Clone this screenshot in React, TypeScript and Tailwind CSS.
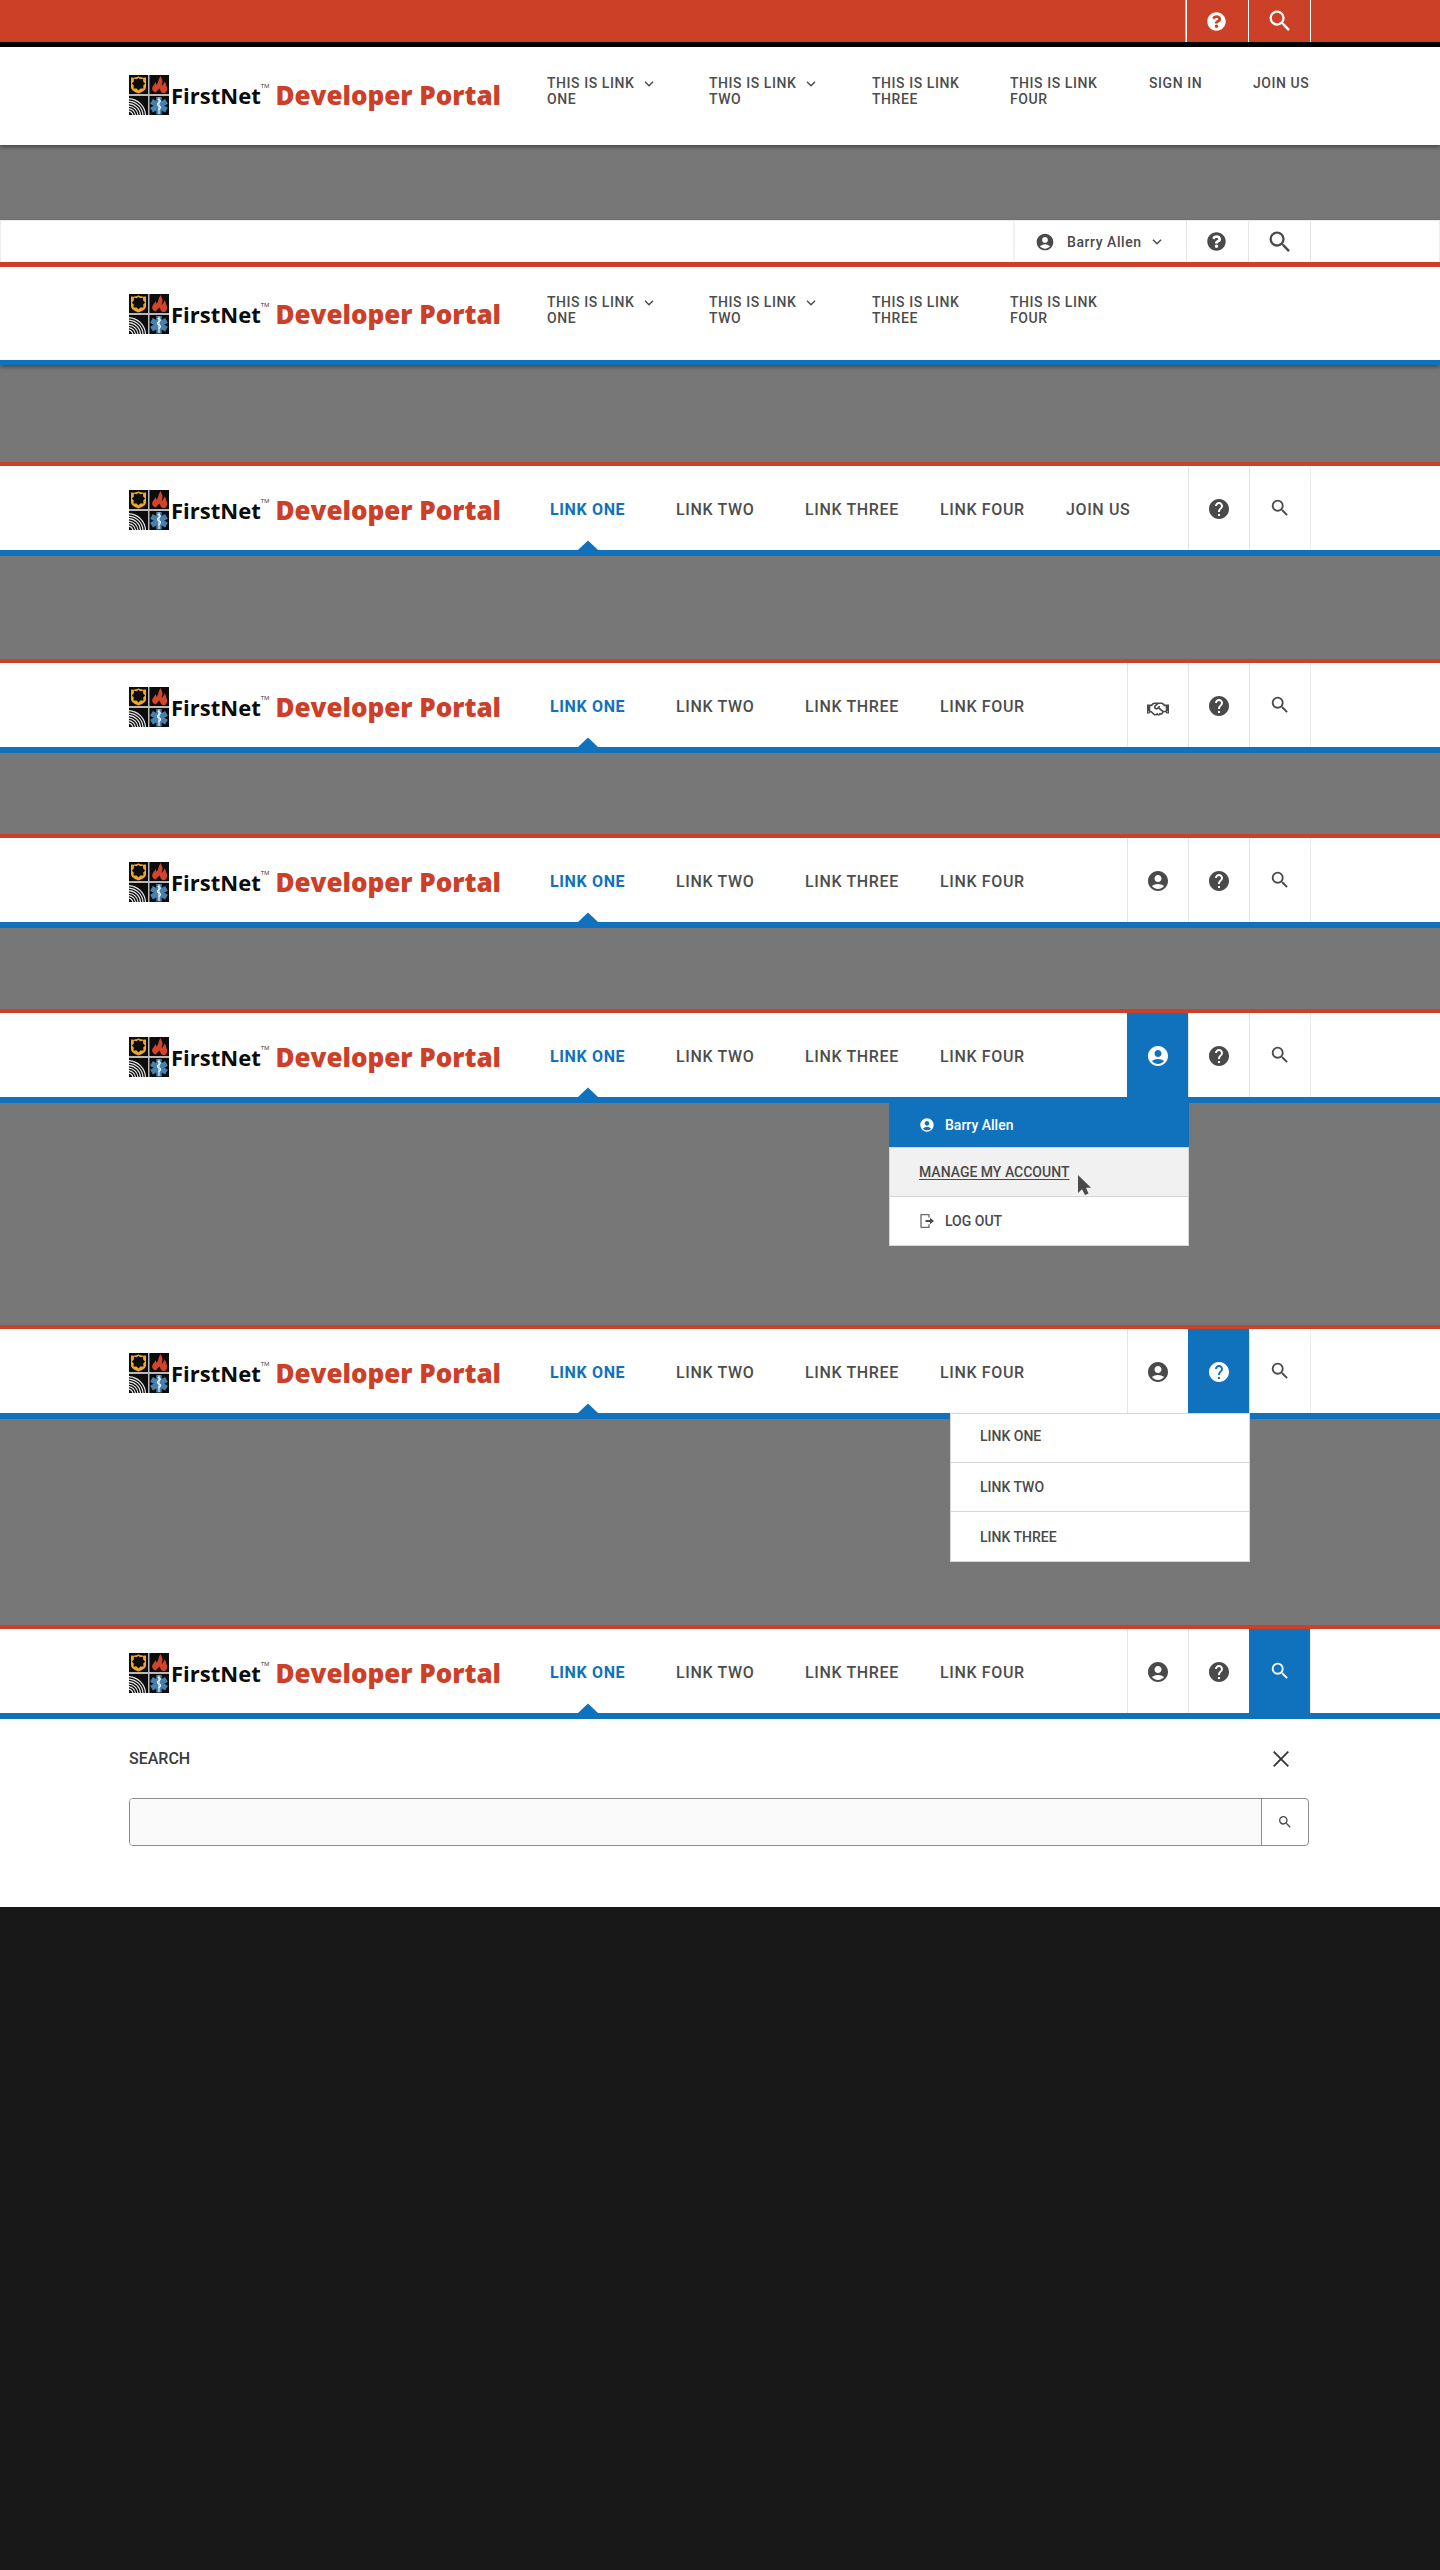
import React from "react";
import { MdAccountCircle, MdHelp, MdSearch } from "react-icons/md";
import { FaQuestionCircle, FaRegHandshake } from "react-icons/fa";

type Tool = "partner" | "account" | "help" | "search";

function Emblem() {
  return (
    <svg viewBox="0 0 40 40" className="size-10 shrink-0" aria-hidden="true">
      <rect width="40" height="40" fill="#b9b9b9" />
      <rect width="19" height="19" fill="#0c0c0c" />
      <rect x="20.5" width="19.5" height="19" fill="#0c0c0c" />
      <rect y="21" width="19" height="19" fill="#0c0c0c" />
      <rect x="20.5" y="21" width="19.5" height="19" fill="#0c0c0c" />
      <path d="M2 2.6C5 3 7.5 2.6 9.5 1.3c2 1.300 4.500 1.700 7.500 1.300v9.400c0 3.200-3 4.800-7.500 6.400C5 16.800 2 15.200 2 12z" fill="#f0a62a" />
      <path d="M9.500 3.600l1.600 1.300 2.400-.4.1 2.400 1.700 1.700-1.700 1.700.2 2.500-2.500-.1-1.800 2-1.800-2-2.500.1.200-2.500-1.700-1.700 1.700-1.700.1-2.400 2.400.4z" fill="#0c0c0c" stroke="#0c0c0c" strokeWidth="1.200" />
      <path d="M31.800.9c.6 2.800 2.400 4.400 1.600 7.200-.3 1.100-.9 1.900-.4 2.900.7-2 2.600-2.500 2.400-4.700 2.200 2 1.200 3.900 2.500 5.800.9 1.500.4 4.100-1.500 5.700-1.500.5-3.500.3-4.300-.8-1-1.400-.7-2.500-1.700-3.500-.8 1.500-2.800 1.900-3.200 3.900-2.400-.5-4.500-1.900-4-4.700.5-2.500 2.600-2.800 2.900-5.500 1 .7 1.300 1.500 1.300 2.500C30 7.500 28.700 4.500 31.800.9z" fill="#d2452b" />
      <svg x="0" y="21" width="19" height="19" viewBox="0 0 19 19">
        <g fill="none" stroke="#e4e4e4" strokeWidth="1.200">
          <circle cx="-1" cy="20" r="5" />
          <circle cx="-1" cy="20" r="7.500" />
          <circle cx="-1" cy="20" r="10" />
          <circle cx="-1" cy="20" r="12.500" />
          <circle cx="-1" cy="20" r="15" />
          <circle cx="-1" cy="20" r="17.500" />
        </g>
      </svg>
      <g stroke="#4682ad" strokeWidth="5.400">
        <path d="M30 22v17.500M22.500 26.400l15 8.700M37.500 26.400l-15 8.700" />
      </g>
      <path d="M30 22.500v16.500" stroke="#fff" strokeWidth="1" />
      <path d="M28.600 24.500c3.400.4 3.400 2.300 1.300 3.200s-1.900 2.700.3 3.300 1.700 2.700-.6 3.600" fill="none" stroke="#fff" strokeWidth="1.100" />
    </svg>
  );
}

function Brand() {
  return (
    <a href="#home" className="flex w-[418px] shrink-0 items-center whitespace-nowrap font-['Open_Sans',sans-serif]">
      <Emblem />
      <span className="ml-0.5 text-[22px] leading-10 font-bold text-[#0c0c0c]">FirstNet</span>
      <sup className="mb-3 text-[6px] text-[#333]">TM</sup>
      <span className="ml-1.5 text-[26px] leading-10 font-extrabold text-[#cc4028]">Developer Portal</span>
    </a>
  );
}

function Chevron() {
  return (
    <svg viewBox="0 0 10 6" className="h-1.5 w-2.5 shrink-0" fill="none" stroke="currentColor" strokeWidth="1.500" aria-hidden="true">
      <path d="M1 .8l4 4 4-4" />
    </svg>
  );
}

function WideLink({ first, second, menu }: { first: string; second?: string; menu?: boolean }) {
  return (
    <a href="#link" className="flex items-start gap-2.5 whitespace-nowrap">
      <span>
        {first}
        {second && <br />}
        {second}
      </span>
      {menu && (
        <span className="pt-1.5">
          <Chevron />
        </span>
      )}
    </a>
  );
}

function WideNav({ guest }: { guest?: boolean }) {
  return (
    <nav className="grid grid-cols-[162px_163px_138px_139px_104px_auto] pb-2 text-sm leading-4 font-medium tracking-[0.04em] text-[#4d4d4d]">
      <WideLink first="THIS IS LINK" second="ONE" menu />
      <WideLink first="THIS IS LINK" second="TWO" menu />
      <WideLink first="THIS IS LINK" second="THREE" />
      <WideLink first="THIS IS LINK" second="FOUR" />
      {guest && <WideLink first="SIGN IN" />}
      {guest && <WideLink first="JOIN US" />}
    </nav>
  );
}

function Shell({ children, className = "" }: { children: React.ReactNode; className?: string }) {
  return <div className={`mx-auto flex max-w-[1182px] ${className}`}>{children}</div>;
}

const toolLabels: Record<Tool, string> = {
  partner: "Partners",
  account: "Account",
  help: "Help",
  search: "Search",
};

function ToolIcon({ tool }: { tool: Tool }) {
  if (tool === "partner") return <FaRegHandshake className="mt-2 h-[18px] w-[22px]" />;
  if (tool === "account") return <MdAccountCircle className="mt-0.5 size-6" />;
  if (tool === "help") return <MdHelp className="mt-0.5 size-6" />;
  return <MdSearch className="size-[22px]" />;
}

function CompactHeader({
  tools,
  active,
  join,
  children,
}: {
  tools: Tool[];
  active?: Tool;
  join?: boolean;
  children?: React.ReactNode;
}) {
  return (
    <header className="border-t-4 border-b-6 border-t-[#cc4028] border-b-[#1072bd] bg-white">
      <Shell className="relative h-[84px] items-stretch">
        <div className="flex items-center pt-1">
          <Brand />
        </div>
        <nav className="ml-[3px] grid grid-cols-[126px_129px_135px_126px_auto] items-center pt-1 text-base font-medium tracking-[0.04em] whitespace-nowrap text-[#4d4d4d]">
          <a href="#one" aria-current="page" className="relative flex h-full items-center font-bold text-[#1072bd]">
            LINK ONE
            <svg viewBox="0 0 20 10" className="absolute bottom-0 left-7 h-2.5 w-5" aria-hidden="true">
              <path d="M10 0.500L20 10H0z" fill="#1072bd" />
            </svg>
          </a>
          <a href="#two">LINK TWO</a>
          <a href="#three">LINK THREE</a>
          <a href="#four">LINK FOUR</a>
          {join && <a href="#join">JOIN US</a>}
        </nav>
        <div className="ml-auto flex border-r border-[#ececec]">
          {tools.map((tool) => (
            <button
              key={tool}
              type="button"
              aria-label={toolLabels[tool]}
              className={
                tool === active
                  ? "flex w-[61px] items-center justify-center border-l border-[#1072bd] bg-[#1072bd] text-white"
                  : "flex w-[61px] items-center justify-center border-l border-[#e4e4e4] text-[#4a4a4a]"
              }
            >
              <ToolIcon tool={tool} />
            </button>
          ))}
        </div>
        {children}
      </Shell>
    </header>
  );
}

function UtilityButton({ label, dark, children }: { label: string; dark?: boolean; children: React.ReactNode }) {
  return (
    <button
      type="button"
      aria-label={label}
      className={
        dark
          ? "flex w-[62px] items-center justify-center border-l border-white text-white"
          : "flex w-[62px] items-center justify-center border-l border-[#e4e4e4] text-[#4a4a4a]"
      }
    >
      {children}
    </button>
  );
}

function AccountMenu() {
  return (
    <div className="absolute top-full right-[122px] w-[300px] text-sm font-medium text-[#4a4a4a]">
      <div className="flex h-[50px] items-center gap-2.5 bg-[#1072bd] px-[30px] pt-1.5 text-white">
        <MdAccountCircle className="size-4" />
        Barry Allen
      </div>
      <div className="border border-[#d6d6d6] bg-white">
        <a href="#account" className="relative flex h-12 items-center bg-[#f1f1f1] px-[29px] underline underline-offset-2">
          MANAGE MY ACCOUNT
          <svg viewBox="0 0 13 20" className="absolute top-[27px] left-[188px] h-5 w-[13px]" aria-hidden="true">
            <path d="M0 0v18l4-3.800 3 5.800 3.500-1.500L8 12.800h5z" fill="#4a4a4a" />
          </svg>
        </a>
        <a href="#logout" className="flex h-[49px] items-center gap-2.5 border-t border-[#d6d6d6] px-[29px]">
          <svg viewBox="0 0 16 16" className="size-4" fill="none" aria-hidden="true">
            <path d="M10 4.800V1.700H2v12.600h8v-3.100" stroke="#6a6a6a" strokeWidth="1.300" strokeLinejoin="round" />
            <path d="M6.500 8h6" stroke="#4a4a4a" strokeWidth="2" />
            <path d="M11 4.800L15 8l-4 3.200z" fill="#4a4a4a" />
          </svg>
          LOG OUT
        </a>
      </div>
    </div>
  );
}

function HelpMenu() {
  return (
    <div className="absolute top-full right-[61px] w-[300px] divide-y divide-[#d6d6d6] border border-[#d6d6d6] bg-white text-sm font-medium text-[#4a4a4a]">
      {["LINK ONE", "LINK TWO", "LINK THREE"].map((label) => (
        <a key={label} href="#help" className="flex h-[49px] items-center px-[29px] first:pb-1">
          {label}
        </a>
      ))}
    </div>
  );
}

function SearchPanel() {
  return (
    <section className="bg-white pt-[26px] pb-[61px]">
      <div className="mx-auto max-w-[1182px] pr-0.5">
        <div className="flex h-[27px] items-center justify-between">
          <label htmlFor="site-search" className="text-base font-medium text-[#3c3c3c]">
            SEARCH
          </label>
          <button type="button" aria-label="Close search" className="mr-5 text-[#333]">
            <svg viewBox="0 0 16 16" className="size-4" stroke="currentColor" strokeWidth="1.800" aria-hidden="true">
              <path d="M.7.700l14.600 14.600M15.300.700L.7 15.300" />
            </svg>
          </button>
        </div>
        <form className="mt-[26px] flex h-12 overflow-hidden rounded border border-[#8c8c8c]">
          <input id="site-search" type="text" className="min-w-0 grow bg-[#fafafa] px-4 outline-none" />
          <button type="button" aria-label="Submit search" className="flex w-[47px] items-center justify-center border-l border-[#8c8c8c] text-[#4a4a4a]">
            <MdSearch className="size-4" />
          </button>
        </form>
      </div>
    </section>
  );
}

export default function App() {
  return (
    <div className="min-h-screen bg-[#181818] font-['Roboto',sans-serif]">
      <main className="bg-[#777]">
        <header className="bg-white shadow-[0_2px_4px_rgba(0,0,0,0.4)]">
          <div className="border-b-5 border-black bg-[#cc4028]">
            <Shell className="h-[42px] justify-end border-r border-white">
              <div className="flex border-l border-white/50">
                <UtilityButton label="Help" dark>
                  <FaQuestionCircle className="mr-0.5 size-[19px]" />
                </UtilityButton>
                <UtilityButton label="Search" dark>
                  <MdSearch className="size-7" />
                </UtilityButton>
              </div>
            </Shell>
          </div>
          <Shell className="h-[98px] items-center pb-0.5">
            <Brand />
            <WideNav guest />
          </Shell>
        </header>

        <header className="mt-[75px] border-b-5 border-[#1072bd] bg-white shadow-[0_2px_4px_rgba(0,0,0,0.4)]">
          <div className="border-b-5 border-[#cc4028]">
            <div className="border border-b-0 border-[#ececec]">
              <Shell className="h-[41px] justify-end border-r border-[#e4e4e4]">
                <button
                  type="button"
                  className="flex w-[173px] items-center border-l-2 border-[#f1f1f1] pl-5 text-sm font-medium tracking-[0.04em] text-[#4a4a4a]"
                >
                  <MdAccountCircle className="mr-3 size-5" />
                  Barry Allen
                  <span className="ml-2.5">
                    <Chevron />
                  </span>
                </button>
                <UtilityButton label="Help">
                  <FaQuestionCircle className="mr-0.5 size-[19px]" />
                </UtilityButton>
                <UtilityButton label="Search">
                  <MdSearch className="size-7" />
                </UtilityButton>
              </Shell>
            </div>
          </div>
          <Shell className="h-[93px] items-center">
            <Brand />
            <WideNav />
          </Shell>
        </header>

        <div className="mt-[97px]">
          <CompactHeader tools={["help", "search"]} join />
        </div>
        <div className="mt-[103px]">
          <CompactHeader tools={["partner", "help", "search"]} />
        </div>
        <div className="mt-[81px]">
          <CompactHeader tools={["account", "help", "search"]} />
        </div>
        <div className="mt-[81px]">
          <CompactHeader tools={["account", "help", "search"]} active="account">
            <AccountMenu />
          </CompactHeader>
        </div>
        <div className="mt-[222px]">
          <CompactHeader tools={["account", "help", "search"]} active="help">
            <HelpMenu />
          </CompactHeader>
        </div>
        <div className="mt-[206px]">
          <CompactHeader tools={["account", "help", "search"]} active="search" />
          <SearchPanel />
        </div>
      </main>
    </div>
  );
}
